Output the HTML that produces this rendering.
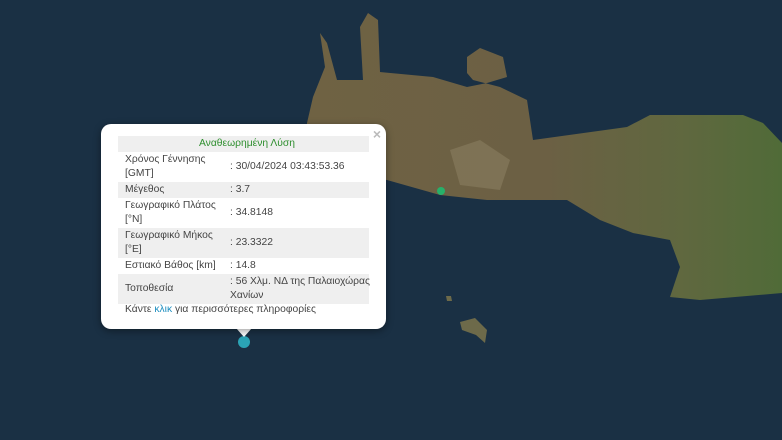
<!DOCTYPE html>
<html><head><meta charset="utf-8"><style>
html,body{margin:0;padding:0;width:782px;height:440px;overflow:hidden;background:#1a3044;font-family:"Liberation Sans",sans-serif}
svg{position:absolute;left:0;top:0}
.pop{position:absolute;left:101px;top:124px;width:285px;height:205px;background:#fff;border-radius:10px;box-shadow:0 2px 8px rgba(0,0,0,.4)}
.tip{position:absolute;left:236px;top:328px;width:0;height:0;border-left:8px solid transparent;border-right:8px solid transparent;border-top:9px solid #fff}
.x{position:absolute;right:5px;top:2px;color:#bbb;font-size:14px;font-weight:bold}
table{position:absolute;left:17px;top:12px;width:251px;border-collapse:collapse;font-size:10.3px;color:#444;line-height:14px;table-layout:fixed}
td{padding:1px 0 1px 7px;vertical-align:middle;white-space:nowrap}
td.v{padding-left:2px}
tr.g td{background:#efefef}
.h{text-align:center;color:#2f8f2f;height:14px}
.f{position:absolute;left:24px;top:180px;font-size:10.3px;color:#444}
.f span{color:#1f8fc0}
.m{position:absolute;left:238px;top:336px;width:12px;height:12px;border-radius:50%;background:#2ba3b5}
.g2{position:absolute;left:437px;top:187px;width:8px;height:8px;border-radius:50%;background:#27b06a}
</style></head><body>
<svg width="782" height="440">
<defs>
<linearGradient id="l" x1="0" y1="0" x2="1" y2="0"><stop offset="0" stop-color="#6f6243"/><stop offset=".5" stop-color="#6c6044"/><stop offset=".8" stop-color="#5f683f"/><stop offset="1" stop-color="#506b38"/></linearGradient>
</defs>
<rect width="782" height="440" fill="#1a3044"/>
<polygon fill="url(#l)" points="320,33 327,43 337,80 363,80 360,27 368,13 378,20 380,72 433,77 467,87 487,83 507,77 503,57 480,48 467,57 467,73 473,80 500,87 527,100 533,140 627,127 650,115 743,115 763,123 782,143 782,293 700,300 670,297 680,267 670,240 633,233 600,220 567,200 487,200 440,195 387,180 307,170 307,123 313,97 325,67"/>
<polygon fill="#8f8466" opacity=".5" points="450,150 480,140 510,160 500,190 460,185"/>
<polygon fill="#6d6a4a" points="460,322 475,318 487,330 485,343 476,335 462,330"/>
<polygon fill="#6d6a4a" points="446,296 451,296 452,301 447,301"/>
</svg>
<div class="g2"></div>
<div class="m"></div>
<div class="tip"></div>
<div class="pop">
<div class="x">×</div>
<table>
<colgroup><col style="width:110px"><col style="width:141px"></colgroup>
<tr class="g"><td colspan="2" class="h">Αναθεωρημένη Λύση</td></tr>
<tr><td>Χρόνος Γέννησης<br>[GMT]</td><td class="v">: 30/04/2024 03:43:53.36</td></tr>
<tr class="g"><td>Μέγεθος</td><td class="v">: 3.7</td></tr>
<tr><td>Γεωγραφικό Πλάτος<br>[°N]</td><td class="v">: 34.8148</td></tr>
<tr class="g"><td>Γεωγραφικό Μήκος<br>[°E]</td><td class="v">: 23.3322</td></tr>
<tr><td>Εστιακό Βάθος [km]</td><td class="v">: 14.8</td></tr>
<tr class="g"><td>Τοποθεσία</td><td class="v">: 56 Χλμ. ΝΔ της Παλαιοχώρας<br>Χανίων</td></tr>
</table>
<div class="f">Κάντε <span>κλικ</span> για περισσότερες πληροφορίες</div>
</div>
</body></html>
